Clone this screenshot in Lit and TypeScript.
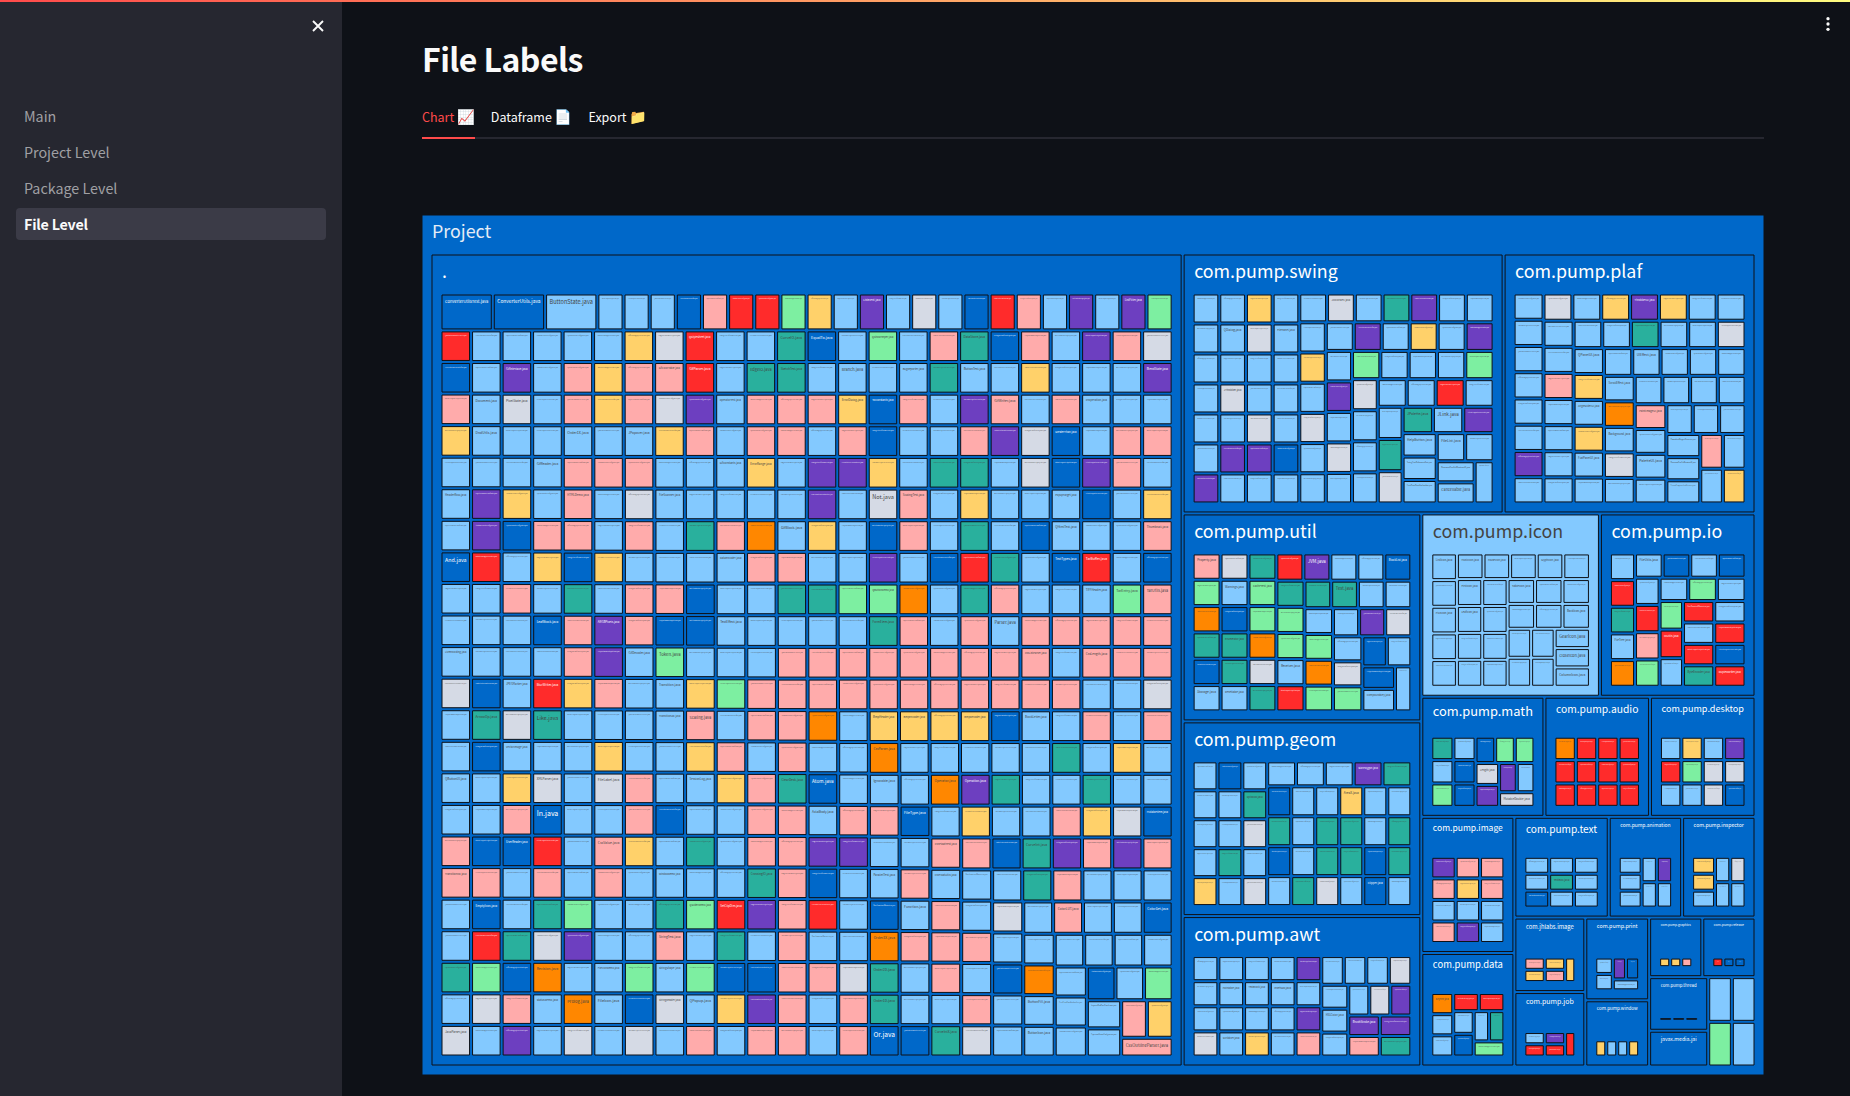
import { LitElement, html, svg, css } from "lit";
import { customElement, property } from "lit/decorators.js";
import { classMap } from "lit/directives/class-map.js";

type Rect = { x0: number; y0: number; x1: number; y1: number };
type Pack = {
  name: string;
  value: number;
  fill?: string;
  big?: number;
  rows: string[];
  names?: Record<string, string>;
};

const FILL: Record<string, string> = {
  B: "#0068c9", L: "#83c9ff", R: "#ff2b2b", P: "#ffabab", T: "#29b09d",
  G: "#7defa1", O: "#ff8700", Y: "#ffd16a", V: "#6d3fc0", S: "#d5dae5",
};
const LIGHT_TEXT = "BRV";

/* Each string is one visual row of files, one letter per file colour. */
const PACKS: Pack[] = [
  {
    name: ".", value: 579, big: 3,
    rows: [
      "BBLLLLBPRRGYLVLSLBRPLVLVG",
      "RLLLLLYSRLLTBLGLPTBPLVPS", "BLVLPYPPRLTTLLLLTLLYLLLV", "PLSLPYPSVLPPPYBPLVPLPLLL",
      "YLLLLLLYPLPPLPBLLPVSBLPP", "LLLLPPPLLLYLVVYLTTLSBVPL", "LVYLPLSLLLLLVLSPLYLLLBLY",
      "LVBPPLPLTPOLYLBPLTLBLLLP", "BRLYBYLLLLPPLLVLBRTLBRLB", "LLPLTLPPBLLTTGGOLTPLLLGP",
      "LLLBPVPBBLLLLLTPLPLPPPPP", "LLLLPVLGLLLPPPPPPPPPLPPP", "SBLRYPLLYGPPPPPPPPPPPLLS",
      "LTSTLLLLPLPPOLYYYYBLLPLP", "LBLLLYLLYPLPLLOLLLLLTLYL", "LLYSLSPLLYPTBLLLOVTLLTLL",
      "LLPBLLPBLLPPLPPBLYLLPYSB", "PBBRLPYLTLPPVVLLPPBTVPVP", "PPLPLPLLLLTPBLLPLLLTPLLL",
      "LBLTGLLTGRVPRLBLPLSLPLLB", "LRTSVLLPLTLPLLOPPPLLLLLL", "TGBOLLGLGBBPPSTLPLBOLBLG",
      "LSPLOLBSLYVPLPTLLPLLLLPY", "SLVLSLSLPLPPLPBBTSLLLLP",
    ],
    names: {
      "0:0": "ConverterUtilsTest", "0:1": "ConverterUtils", "0:2": "ButtonState", "0:13": "ListEvent", "0:23": "ListFilter",
      "1:8": "QStyleSheet", "1:11": "CurveIO", "1:12": "EqualTo", "1:14": "QShowHelper", "1:17": "DataStore",
      "2:2": "GifInterlace", "2:7": "GifColorTable", "2:8": "GifParser", "2:10": "EdgeIO", "2:11": "SketchTest",
      "2:13": "Branch", "2:15": "BugReporter", "2:17": "ButtonTest", "2:23": "BlendState",
      "3:1": "Document", "3:2": "PixelState", "3:9": "OperatorTest", "3:13": "ErrorDialog", "3:14": "ToConstants",
      "3:18": "GifWriter", "3:21": "XYOperation",
      "4:1": "DndUtils", "4:4": "Order1X", "4:6": "JPopover", "4:20": "GreaterThan",
      "5:3": "GifReader", "5:9": "GifConstants", "5:10": "ErrorRange",
      "6:0": "HeaderRow", "6:4": "HTMLDemo", "6:7": "FileScanner", "6:14": "Not", "6:15": "ScalingTest", "6:20": "PopupTarget",
      "7:11": "GifBlock", "7:20": "QHtmlText", "7:23": "Thumbnail",
      "8:0": "And", "8:9": "DataEncoder", "8:20": "TextTypes", "8:21": "TarBuffer",
      "9:14": "QButtonDemo", "9:21": "TIFFHeader", "9:22": "TarEntry", "9:23": "TarUtils",
      "10:3": "LeafBlock", "10:5": "ARGBPixels", "10:9": "TextEffect", "10:14": "FormElem", "10:18": "Parser",
      "11:0": "LiveEncoding", "11:6": "GifDecoder", "11:7": "Token", "11:19": "CssListParser", "11:21": "CssLength",
      "12:2": "JPEGMarker", "12:3": "BlurWriter", "12:7": "Transition",
      "13:1": "ArrowOp", "13:3": "Like", "13:7": "Transition2D", "13:8": "Scaling", "13:14": "BmpHeader",
      "13:15": "BmpEncoder", "13:17": "BmpDecoder", "13:19": "BlockLetter",
      "14:2": "VectorImage", "14:14": "CssParser",
      "15:0": "QButtonUI", "15:3": "XMLParser", "15:5": "FileLabel", "15:8": "SessionLog", "15:11": "ClearDesk",
      "15:12": "Atom", "15:14": "Ignorable", "15:16": "Operator", "15:17": "Operation",
      "16:3": "In", "16:12": "AxialBody", "16:15": "FileType", "16:23": "MutableItem",
      "17:2": "UserReader", "17:5": "CssValue", "17:16": "CssFloatTest", "17:19": "CurveInt",
      "18:0": "Transition3D", "18:7": "WindowDemo", "18:10": "CrossingIO", "18:14": "ParallelTest", "18:16": "CssFloatUtils",
      "19:1": "EmptyIcon", "19:8": "QSliderDemo", "19:9": "SetClipDim", "19:15": "Function", "19:20": "ColorLUT", "19:23": "ColorSet",
      "20:7": "StringTest", "20:14": "Order3X",
      "21:3": "Revision", "21:5": "FileIconDemo", "21:7": "StringShape", "21:14": "Order2D",
      "22:3": "StatusDemo", "22:4": "Prolog", "22:5": "FileIcon", "22:7": "StringReader", "22:8": "QPopup",
      "22:14": "Order1D", "22:19": "ButtonFill",
      "23:0": "JavaParser", "23:14": "Or", "23:16": "CurveIntX", "23:19": "ButtonIcon", "23:22": "CssOutlineParser",
    },
  },
  {
    name: "com.pump.swing", value: 79,
    rows: ["LLYLLSLTVLL", "LLSLLLVLYLV", "LLLLYLGLLLG", "LSLLLVSLLRL", "LLSLSLLLTLV", "LVVBLSLTLLLLL", "VLLLLLLSLLL"],
    names: {
      "0:5": "JColorWell", "1:1": "QDialog", "1:3": "FilePanel", "3:1": "JThrobber", "4:8": "JPalette", "4:9": "JLink",
      "5:8": "HelpButton", "5:10": "FileList", "6:9": "Cancellable",
    },
  },
  {
    name: "com.pump.plaf", value: 62,
    rows: ["LSLYVYLL", "LLLLTLLS", "LLLLLLLL", "LPYLLLLL", "LLLOPLLL", "LLYLLL", "VLLSLLPL", "LLLLLLLY"],
    names: {
      "0:4": "ThrobberUI", "2:2": "QPanelUI", "2:4": "UIEffect", "3:3": "ScrollEffect", "4:2": "AngleSliderUI",
      "4:4": "PaintImageUI", "5:3": "Background", "6:2": "FlatPanelUI", "6:4": "PaletteUI",
    },
  },
  {
    name: "com.pump.util", value: 47,
    rows: ["PSTRVLLB", "GLGTTTLL", "OBGGLLVS", "TTOGGLBL", "BTSLOSB", "LLTRGGLL"],
    names: {
      "0:0": "Property", "0:4": "JVM", "0:7": "BlockList", "1:1": "Warnings", "1:2": "CacheTest", "1:5": "Text",
      "3:1": "Enumerator", "4:3": "Receiver", "5:0": "Storage", "5:1": "Resettable", "5:6": "CompoundKey",
    },
  },
  {
    name: "com.pump.geom", value: 44,
    rows: ["LBLLLLVT", "LLTBLLYLL", "LLSTLTTLT", "LTLBLTTBT", "YLSLTSLBL"],
    names: { "0:6": "StarPolygon", "1:2": "Spiral2D", "1:6": "AreaX", "4:7": "Clipper" },
  },
  {
    name: "com.pump.awt", value: 34,
    rows: ["LLLLVLLLS", "LLLLLLLSV", "LLLLVLVV", "SLYLPLPT"],
    names: { "1:1": "Paintable", "1:2": "TextBlock", "1:3": "Insets2D", "2:5": "HSLColor", "2:6": "BrushStroke", "3:1": "Scribbler" },
  },
  {
    name: "com.pump.icon", value: 31, fill: "L",
    rows: ["LLLLLL", "LLLLLL", "LLLLLL", "LLLLLLL", "LLLLLL"],
    names: {
      "0:0": "ListIcon", "0:1": "MusicIcon", "0:2": "PauseIcon", "0:4": "GlyphIcon", "1:1": "FirstIcon", "1:3": "TableIcon",
      "2:0": "PlusIcon", "2:1": "LeafIcon", "2:5": "BackIcon", "3:5": "GearIcon", "3:6": "CloseIcon", "4:5": "ColumnIcon",
    },
  },
  {
    name: "com.pump.io", value: 27,
    rows: ["LLBLB", "RLLGL", "TRGRLLR", "LPRRB", "OGLTR"],
    names: { "0:1": "FileUtils", "3:0": "FileTree", "3:2": "IOUtils", "4:3": "ByteEncoder", "4:4": "DuplexWriter" },
  },
  { name: "com.pump.math", value: 14, rows: ["TLBGG", "LBSVL", "GBVS"], names: { "1:2": "Length", "2:3": "MutableDouble" } },
  { name: "com.pump.audio", value: 12, rows: ["ORRR", "RRRR", "RRRR"] },
  { name: "com.pump.desktop", value: 12, rows: ["LYLV", "RGSS", "LLSB"] },
  { name: "com.pump.image", value: 12, rows: ["VPP", "PYP", "LLL", "PVL"] },
  { name: "com.pump.data", value: 10, rows: ["ORR", "LLLT", "LBG"], names: { "0:0": "KeyTree" } },
  { name: "com.pump.text", value: 9, rows: ["LLL", "LTL", "BLL"], names: { "1:1": "TextBox" } },
  { name: "com.pump.animation", value: 7, rows: ["LLLV", "LLL"] },
  { name: "com.pump.inspector", value: 7, rows: ["YYLS", "LLL"] },
  { name: "com.jhlabs.image", value: 5, rows: ["PYYPY"] },
  { name: "com.pump.job", value: 5, rows: ["LRVRR"] },
  { name: "com.pump.print", value: 5, rows: ["LLVLB"] },
  { name: "com.pump.window", value: 4, rows: ["YLLY"] },
  { name: "com.pump.graphics", value: 3, rows: ["YYP"] },
  { name: "com.pump.release", value: 3, rows: ["RBB"] },
  { name: "com.pump.thread", value: 3, rows: ["BBB"] },
  { name: "javax.media.jai", value: 2, rows: [] },
  { name: "", value: 1, fill: "L", rows: [] },
  { name: "", value: 1, fill: "L", rows: [] },
  { name: "", value: 1, fill: "G", rows: [] },
  { name: "", value: 1, fill: "L", rows: [] },
];

/* File names for cells whose label is scaled below legible size. */
const LONG_NAMES = [
  "AbstractCompositeOutputStream", "BasicTransition2DInstruction", "BufferedImageBytePixelIterator",
  "ColorPickerPanelUserInterface", "CompositeMeasuredInputStream", "DecoratedTreeCellRendererUI",
  "ExpressionBuilderConfiguration", "FilteredCompositeIconDecorator", "GradientTexturePaintDemoPanel",
  "ImageSizeCalculatorProperties", "InspectorRowPanelTransferable", "MultiThumbSliderPropertyEditor",
  "ObservablePropertiesCollection", "PaddedIconWrapperDecoration", "QuantizationParameterCollector",
  "RectangularTransformInterpolator", "ScalingFilterPerformanceTests", "ThumbnailGeneratorConfiguration",
];

/** Squarified tiling, target ratio 1, for values sorted in descending order. */
function squarify(values: number[], box: Rect): Rect[] {
  const out: Rect[] = [];
  let { x0, y0 } = box;
  const { x1, y1 } = box;
  let total = values.reduce((a, b) => a + b, 0);
  let i = 0;
  while (i < values.length) {
    const dx = x1 - x0;
    const dy = y1 - y0;
    let j = i;
    let sum = values[j++];
    let min = sum;
    let max = sum;
    const alpha = Math.max(dy / dx, dx / dy) / total;
    let beta = sum * sum * alpha;
    let best = Math.max(max / beta, beta / min);
    for (; j < values.length; j++) {
      const v = values[j];
      sum += v;
      if (v < min) min = v;
      if (v > max) max = v;
      beta = sum * sum * alpha;
      const ratio = Math.max(max / beta, beta / min);
      if (ratio > best) {
        sum -= v;
        break;
      }
      best = ratio;
    }
    if (dx < dy) {
      const h = (dy * sum) / total;
      let x = x0;
      for (let k = i; k < j; k++) {
        const w = (dx * values[k]) / sum;
        out.push({ x0: x, y0, x1: x + w, y1: y0 + h });
        x += w;
      }
      y0 += h;
    } else {
      const w = (dx * sum) / total;
      let y = y0;
      for (let k = i; k < j; k++) {
        const h = (dy * values[k]) / sum;
        out.push({ x0, y0: y, x1: x0 + w, y1: y + h });
        y += h;
      }
      x0 += w;
    }
    total -= sum;
    i = j;
  }
  return out;
}

const GAP = 3;
const SIDE = 10;
const HEAD = 40;

/** Collapses an inverted rectangle onto its middle. */
function settle(x0: number, y0: number, x1: number, y1: number): Rect {
  if (x1 < x0) x0 = x1 = (x0 + x1) / 2;
  if (y1 < y0) y0 = y1 = (y0 + y1) / 2;
  return { x0, y0, x1, y1 };
}
const shrink = (r: Rect) => settle(r.x0 + GAP / 2, r.y0 + GAP / 2, r.x1 - GAP / 2, r.y1 - GAP / 2);
const content = (r: Rect) =>
  settle(r.x0 + SIDE - GAP / 2, r.y0 + HEAD - GAP / 2, r.x1 - SIDE + GAP / 2, r.y1 - SIDE + GAP / 2);

/** Groups files into visual rows, each ordered from left to right. */
function intoBands(leaves: Rect[], box: Rect, pack: Pack): Rect[][] {
  const n = pack.rows.length;
  const bands: Rect[][] = pack.rows.map(() => []);
  const first = pack.big ? 36.9 : 0;
  for (const leaf of leaves) {
    const cy = (leaf.y0 + leaf.y1) / 2 - box.y0;
    const h = box.y1 - box.y0;
    let b = 0;
    if (pack.big) b = cy < first ? 0 : 1 + Math.floor(((cy - first) / (h - first)) * (n - 1));
    else if (h > 0) b = Math.floor((cy / h) * n);
    bands[Math.max(0, Math.min(n - 1, b))].push(leaf);
  }
  bands.forEach((b) => b.sort((u, v) => Math.round(u.x0) - Math.round(v.x0) || u.y0 - v.y0));
  return bands;
}

const FONT_SIZE = 17.84;
const FAMILY = '"Noto Sans CJK SC", "Noto Sans", sans-serif';
const pen = document.createElement("canvas").getContext("2d")!;
const widths = new Map<string, number>();
function textWidth(text: string): number {
  let w = widths.get(text);
  if (w === undefined) {
    pen.font = `${FONT_SIZE}px ${FAMILY}`;
    w = pen.measureText(text).width;
    widths.set(text, w);
  }
  return w;
}

@customElement("file-treemap")
export class FileTreemap extends LitElement {
  @property({ type: Number }) width = 1342;
  @property({ type: Number }) height = 860;

  static styles = css`
    :host { display: block; }
    .map { display: block; }
    .tile { stroke: #0e1117; stroke-width: 1; }
    .label { font: 17.84px "Noto Sans CJK SC", "Noto Sans", sans-serif; fill: #444444; }
    .label.light { fill: #ffffff; }
    .label.root { fill: #e4ecf6; }
  `;

  private tile(r: Rect, fill: string) {
    return svg`<path class="tile" d="M${r.x0},${r.y0}L${r.x1},${r.y0}L${r.x1},${r.y1}L${r.x0},${r.y1}Z" fill=${fill}></path>`;
  }

  /** A label scaled down until it fits between the side paddings. */
  private label(r: Rect, text: string, pad: number, tone: string) {
    const room = r.x1 - r.x0 - 2 * pad;
    if (!text || room <= 0) return null;
    const s = Math.min(1, room / textWidth(text));
    return svg`<text class="label ${tone}" transform="translate(${r.x0 + pad},${r.y0 + 3 + 20.2 * s}) scale(${s})">${text}</text>`;
  }

  render() {
    const root: Rect = { x0: 0, y0: 0, x1: this.width, y1: this.height };
    const tiles = squarify(PACKS.map((p) => p.value), content(root)).map(shrink);
    const parts: unknown[] = [this.tile(root, FILL.B), this.label(root, "Project", SIDE, "root")];
    let serial = 0;
    tiles.forEach((tile, i) => {
      const pack = PACKS[i];
      const fill = pack.fill ?? "B";
      parts.push(this.tile(tile, FILL[fill]));
      parts.push(this.label(tile, pack.name, SIDE, LIGHT_TEXT.includes(fill) ? "light" : ""));
      if (!pack.rows.length) return;
      const big = pack.big ?? 0;
      const values = Array.from({ length: pack.value - big }, (_, k) => (k < big ? 2 : 1));
      const box = content(tile);
      intoBands(squarify(values, box), box, pack).forEach((band, r) =>
        band.forEach((leaf, c) => {
          const code = pack.rows[r][c] ?? "L";
          const cell = shrink(leaf);
          parts.push(this.tile(cell, FILL[code]));
          const name = pack.names?.[`${r}:${c}`] ?? LONG_NAMES[(serial++ * 7) % LONG_NAMES.length];
          if (cell.y1 - cell.y0 > 4) parts.push(this.label(cell, `${name}.java`, 3, LIGHT_TEXT.includes(code) ? "light" : ""));
        })
      );
    });
    return html`<svg class="map" width=${this.width} height=${this.height}>${parts}</svg>`;
  }
}

const PAGES = ["Main", "Project Level", "Package Level", "File Level"];
const TABS = [["Chart", "📈"], ["Dataframe", "📄"], ["Export", "📁"]];

@customElement("app-root")
export class AppRoot extends LitElement {
  @property() page = "File Level";
  @property() tab = "Chart";

  static styles = css`
    :host {
      display: flex;
      position: relative;
      height: 1096px;
      overflow: hidden;
      background: #0e1117;
      color: #fafafa;
      font-family: "Noto Sans CJK SC", "Noto Sans", sans-serif;
    }
    .decoration {
      position: absolute;
      inset: 0 0 auto 0;
      height: 2px;
      background: linear-gradient(90deg, #ff4b4b, #fffd80);
    }
    .sidebar {
      flex: none;
      box-sizing: border-box;
      width: 342px;
      padding: 100px 16px 0;
      background: #262730;
    }
    .close { position: absolute; left: 310px; top: 18px; width: 16px; height: 16px; }
    .menu { position: absolute; left: 1820px; top: 16px; width: 16px; height: 16px; }
    .nav { display: flex; flex-direction: column; gap: 4px; }
    .link {
      height: 32px;
      padding: 0 8px;
      border-radius: 4px;
      font-size: 14.3px;
      line-height: 32px;
      color: #a0a0a4;
    }
    .link.active {
      background: #3b3b47;
      color: #fafafa;
      font-weight: 700;
      letter-spacing: -0.22px;
    }
    .main { flex: 1; min-width: 0; padding: 36px 86px 0 80px; }
    .title {
      margin: 0;
      font-size: 32px;
      font-weight: 700;
      line-height: 44px;
      letter-spacing: -0.56px;
      white-space: nowrap;
    }
    .tabs {
      display: flex;
      gap: 16px;
      height: 43px;
      margin: 16px 0 76px;
      box-shadow: inset 0 -2px #262730;
    }
    .tab {
      box-sizing: border-box;
      height: 43px;
      border-bottom: 2px solid transparent;
      font-size: 12.5px;
      line-height: 41px;
      white-space: nowrap;
    }
    .tab.active { color: #ff4b4b; border-color: #ff4b4b; }
    .emoji { font-size: 14.3px; line-height: 1; font-family: "Noto Color Emoji", sans-serif; }
  `;

  render() {
    return html`
      <nav class="sidebar">
        <div class="nav">
          ${PAGES.map((p) => html`<div class=${classMap({ link: true, active: p === this.page })}>${p}</div>`)}
        </div>
      </nav>
      <main class="main">
        <h1 class="title">File Labels</h1>
        <div class="tabs">
          ${TABS.map(
            ([t, e]) => html`<div class=${classMap({ tab: true, active: t === this.tab })}>${t} <span class="emoji">${e}</span></div>`
          )}
        </div>
        <file-treemap></file-treemap>
      </main>
      <svg class="close" viewBox="0 0 16 16"><path d="M3 3L13 13M13 3L3 13" stroke="#fafafa" stroke-width="1.9" fill="none"></path></svg>
      <svg class="menu" viewBox="0 0 16 16" fill="#fafafa">
        <circle cx="8" cy="2.7" r="1.65"></circle><circle cx="8" cy="8" r="1.65"></circle><circle cx="8" cy="13.3" r="1.65"></circle>
      </svg>
      <div class="decoration"></div>
    `;
  }
}
